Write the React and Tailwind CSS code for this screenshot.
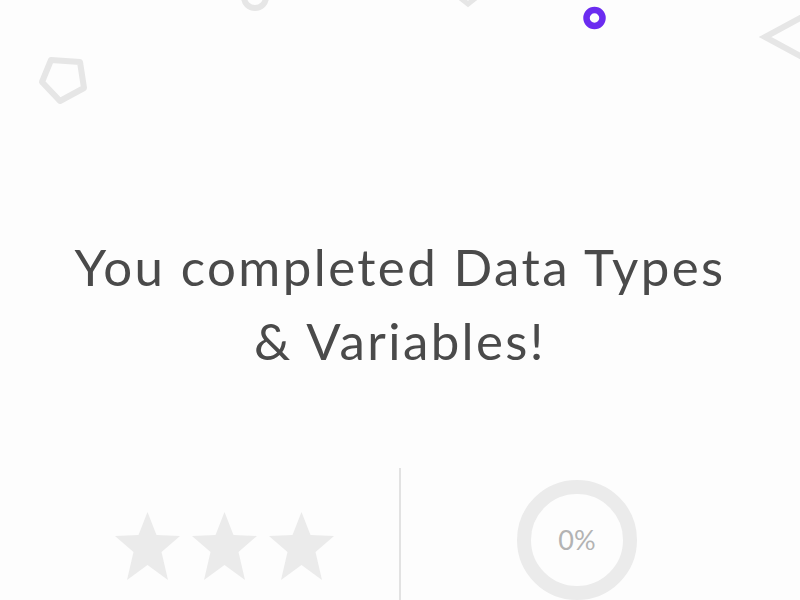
import React from "react";

function Star() {
  return (
    <svg width="65" height="68" viewBox="0 0 65 68">
      <polygon
        points="32.5,0 41.5,23 65,24 46.5,40 53,68 32.5,53 12,68 18.5,40 0,24 23.5,23"
        fill="#ebebeb"
      />
    </svg>
  );
}

function Decorations() {
  return (
    <svg
      className="absolute inset-0 pointer-events-none"
      width="800"
      height="600"
      viewBox="0 0 800 600"
    >
      {/* gray ring cut by top edge */}
      <circle cx="255" cy="-3" r="11" fill="none" stroke="#e6e6e6" strokeWidth="6" />
      {/* small corner peeking at top */}
      <polyline points="459,-3 468,4 477,-3" fill="none" stroke="#e6e6e6" strokeWidth="5" />
      {/* purple ring */}
      <circle cx="594.5" cy="18" r="8" fill="none" stroke="#6b2cf0" strokeWidth="6.5" />
      {/* pentagon */}
      <polygon
        points="51,60 80,62 84,88 60,101 42,82"
        fill="none"
        stroke="#e6e6e6"
        strokeWidth="6"
        strokeLinejoin="round"
      />
      {/* triangle at right edge */}
      <polyline points="815,10 765,37 815,64" fill="none" stroke="#e6e6e6" strokeWidth="6" />
    </svg>
  );
}

export default function App() {
  return (
    <div className="relative w-[800px] h-[600px] overflow-hidden bg-[#fdfdfd] font-['Lato','Noto_Sans',sans-serif]">
      <Decorations />

      {/* Title */}
      <div className="relative flex flex-col items-center pt-[230px]">
        <h1 className="text-center text-[51px] leading-[74px] text-[#4a4a4a] tracking-[2.4px] font-normal">
          You completed Data Types
          <br />& Variables!
        </h1>
      </div>

      {/* Score area */}
      <div className="relative flex mt-[90px] h-[132px]">
        <div className="w-[399px] flex items-start pl-[115px] pt-[44px] gap-[12px]">
          <Star />
          <Star />
          <Star />
        </div>
        <div className="w-[2px] bg-[#e2e2e2]" />
        <div className="flex-1 pl-[116px] pt-[12px]">
          <div className="w-[120px] h-[120px] rounded-full border-[14px] border-[#ebebeb] flex items-center justify-center">
            <span className="text-[27px] text-[#b3b3b3]">0%</span>
          </div>
        </div>
      </div>
    </div>
  );
}
